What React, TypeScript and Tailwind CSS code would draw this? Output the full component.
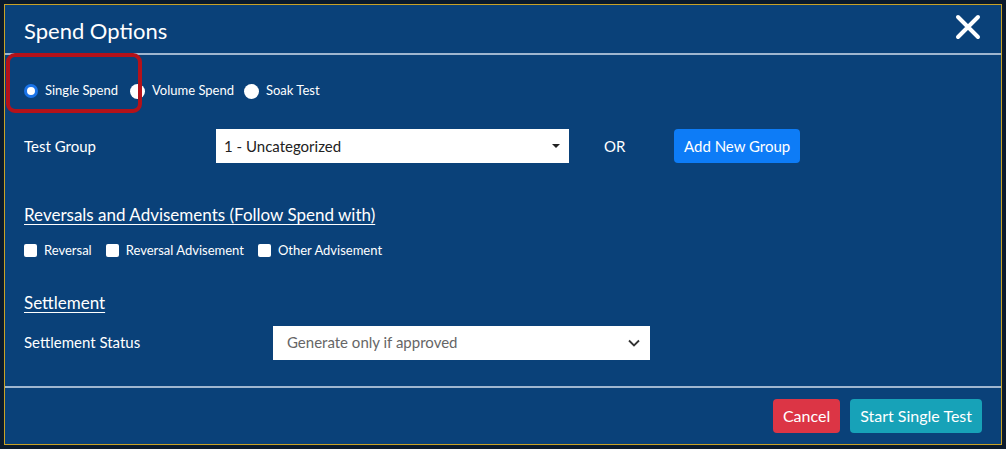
import React from 'react';

const App: React.FC = () => {
  return (
    <div className="w-[1006px] h-[449px] bg-[#0b1a2c] p-[4px] font-[Lato,sans-serif]">
      <div className="w-[998px] h-[441px] bg-[#0a4179] border border-[#c9a227] text-white flex flex-col">
        <div className="h-[50px] flex items-center justify-between pl-[19px] pr-[20px] border-b-2 border-[#9fb6cf]">
          <h1 className="text-[22px] pt-[2px]">Spend Options</h1>
          <svg width="26" height="26" viewBox="0 0 26 26" className="mt-[-4px]">
            <path d="M3 3L23 23M23 3L3 23" stroke="white" strokeWidth="4" strokeLinecap="round" />
          </svg>
        </div>

        <div className="pl-[19px] pr-[20px] pt-[6px]">
          <div className="flex items-center h-[60px] text-[13px] gap-[6px]">
            <div className="relative flex items-center gap-[7px] pr-[6px]">
              <div className="absolute left-[-18px] top-[-28px] w-[136px] h-[60px] border-[4px] border-[#b4121a] rounded-[9px]" />
              <span className="w-[14px] h-[14px] rounded-full bg-white border-[3px] border-[#1a73e8] box-border" />
              <span>Single Spend</span>
            </div>
            <div className="flex items-center gap-[7px] pr-[4px]">
              <span className="w-[15px] h-[15px] rounded-full bg-white" />
              <span>Volume Spend</span>
            </div>
            <div className="flex items-center gap-[7px]">
              <span className="w-[15px] h-[15px] rounded-full bg-white" />
              <span>Soak Test</span>
            </div>
          </div>

          <div className="flex items-center h-[52px] text-[15px] mt-[-1px]">
            <span className="w-[192px]">Test Group</span>
            <div className="w-[353px] h-[34px] bg-white text-[#222] flex items-center justify-between px-[8px]">
              <span>1 - Uncategorized</span>
              <svg width="10" height="6" viewBox="0 0 10 6"><path d="M1 1h8L5 5z" fill="#222" /></svg>
            </div>
            <span className="ml-[35px] w-[70px]">OR</span>
            <button className="h-[34px] px-[10px] bg-[#0d7cf7] rounded-[4px] text-[15px]">Add New Group</button>
          </div>

          <div className="mt-[30px] text-[17px] underline underline-offset-[3px]">Reversals and Advisements (Follow Spend with)</div>
          <div className="flex items-center gap-[14px] mt-[13px] text-[13px]">
            {['Reversal', 'Reversal Advisement', 'Other Advisement'].map((l) => (
              <div key={l} className="flex items-center gap-[7px]">
                <span className="w-[13px] h-[13px] bg-white rounded-[2px]" />
                <span>{l}</span>
              </div>
            ))}
          </div>

          <div className="mt-[30px] text-[17px] underline underline-offset-[3px]">Settlement</div>
          <div className="flex items-center mt-[10px] text-[15px]">
            <span className="w-[249px]">Settlement Status</span>
            <div className="w-[377px] h-[34px] bg-white text-[#666] flex items-center justify-between pl-[14px] pr-[10px]">
              <span>Generate only if approved</span>
              <svg width="12" height="8" viewBox="0 0 12 8"><path d="M1 1.5l5 5 5-5" stroke="#333" strokeWidth="1.8" fill="none" /></svg>
            </div>
          </div>
        </div>

        <div className="mt-auto h-[58px] border-t-2 border-[#9fb6cf] flex items-center justify-end gap-[10px] pr-[19px]">
          <button className="h-[34px] px-[10px] bg-[#dc3545] rounded-[4px] text-[16px]">Cancel</button>
          <button className="h-[34px] px-[10px] bg-[#17a2b8] rounded-[4px] text-[16px]">Start Single Test</button>
        </div>
      </div>
    </div>
  );
};

export default App;
